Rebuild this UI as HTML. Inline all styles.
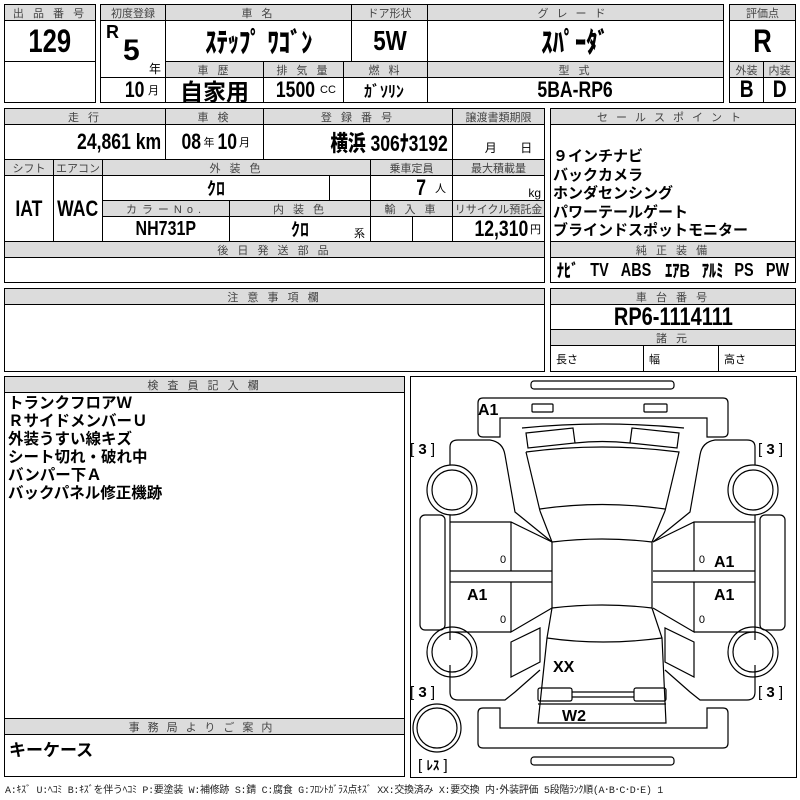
<!DOCTYPE html>
<html><head><meta charset="utf-8">
<style>
body{margin:0;width:800px;height:800px;background:#fff;position:relative;overflow:hidden;font-family:"Liberation Sans","Noto Sans CJK JP",sans-serif;}
.c{position:absolute;box-sizing:border-box;border:1px solid #000;background:#fff;display:flex;align-items:center;justify-content:center;overflow:hidden;white-space:nowrap;}
.h{background:#dcdcdc;font-size:11px;color:#444;letter-spacing:3px;}
.v{font-family:"Liberation Sans","Noto Sans CJK JP",sans-serif;font-weight:bold;font-size:22px;}
.v b{display:inline-block;transform:scaleX(.8);}
.r b{transform-origin:right center;}
.s{font-size:11px;font-weight:normal;font-family:"Liberation Sans","Noto Sans CJK JP",sans-serif;}
.t{position:absolute;white-space:nowrap;}
</style></head><body>
<div class="c h" style="left:4px;top:4px;width:92px;height:17px">出 品 番 号</div>
<div class="c v" style="left:4px;top:20px;width:92px;height:42px;font-size:32px"><b>129</b></div>
<div class="c" style="left:4px;top:61px;width:92px;height:42px"></div>
<div class="c h" style="left:100px;top:4px;width:66px;height:17px;letter-spacing:0">初度登録</div>
<div class="c" style="left:100px;top:20px;width:66px;height:58px"></div>
<div class="t v" style="left:106px;top:22px;font-size:18px">R</div>
<div class="t v" style="left:123px;top:34px;font-size:30px">5</div>
<div class="t" style="left:149px;top:60px;font-size:12px">年</div>
<div class="c v r" style="left:100px;top:77px;width:66px;height:26px;justify-content:flex-end;padding-right:6px"><b>10</b><span class="s" style="margin-left:4px">月</span></div>
<div class="c h" style="left:165px;top:4px;width:187px;height:17px">車 名</div>
<div class="c v" style="left:165px;top:20px;width:187px;height:42px;font-size:28px"><b>ｽﾃｯﾌﾟ ﾜｺﾞﾝ</b></div>
<div class="c h" style="left:351px;top:4px;width:77px;height:17px;letter-spacing:0">ドア形状</div>
<div class="c v" style="left:351px;top:20px;width:77px;height:42px;font-size:28px"><b>5W</b></div>
<div class="c h" style="left:427px;top:4px;width:297px;height:17px;letter-spacing:8px">グレード</div>
<div class="c v" style="left:427px;top:20px;width:297px;height:42px;font-size:28px"><b>ｽﾊﾟｰﾀﾞ</b></div>
<div class="c h" style="left:165px;top:61px;width:99px;height:17px">車 歴</div>
<div class="c h" style="left:263px;top:61px;width:81px;height:17px">排 気 量</div>
<div class="c h" style="left:343px;top:61px;width:85px;height:17px">燃 料</div>
<div class="c h" style="left:427px;top:61px;width:297px;height:17px">型 式</div>
<div class="c v" style="left:165px;top:77px;width:99px;height:26px;font-size:23px;font-family:'Noto Sans CJK JP',sans-serif">自家用</div>
<div class="c v" style="left:263px;top:77px;width:81px;height:26px"><b>1500</b><span class="s">CC</span></div>
<div class="c v" style="left:343px;top:77px;width:85px;height:26px;font-size:16px;justify-content:flex-start;padding-left:20px">ｶﾞｿﾘﾝ</div>
<div class="c v" style="left:427px;top:77px;width:297px;height:26px"><b>5BA-RP6</b></div>
<div class="c h" style="left:729px;top:4px;width:67px;height:17px;letter-spacing:0">評価点</div>
<div class="c v" style="left:729px;top:20px;width:67px;height:42px;font-size:32px"><b>R</b></div>
<div class="c h" style="left:729px;top:61px;width:35px;height:17px;letter-spacing:0">外装</div>
<div class="c h" style="left:763px;top:61px;width:33px;height:17px;letter-spacing:0">内装</div>
<div class="c v" style="left:729px;top:77px;width:35px;height:26px;font-size:24px"><b>B</b></div>
<div class="c v" style="left:763px;top:77px;width:33px;height:26px;font-size:24px"><b>D</b></div>
<div class="c h" style="left:4px;top:108px;width:162px;height:17px">走 行</div>
<div class="c v r" style="left:4px;top:124px;width:162px;height:36px;justify-content:flex-end;padding-right:4px"><b>24,861 km</b></div>
<div class="c h" style="left:165px;top:108px;width:99px;height:17px">車 検</div>
<div class="c v" style="left:165px;top:124px;width:99px;height:36px"><b>08</b><span class="s">年</span><b>10</b><span class="s">月</span></div>
<div class="c h" style="left:263px;top:108px;width:190px;height:17px">登 録 番 号</div>
<div class="c v r" style="left:263px;top:124px;width:190px;height:36px;justify-content:flex-end;padding-right:4px"><b><span style="font-family:'Noto Sans CJK JP';font-size:22px">横浜</span>&nbsp;306ﾅ3192</b></div>
<div class="c h" style="left:452px;top:108px;width:93px;height:17px;letter-spacing:0">譲渡書類期限</div>
<div class="c" style="left:452px;top:124px;width:93px;height:36px;font-size:12px;align-items:flex-end;padding-bottom:3px;justify-content:space-around;padding-left:20px">月<span>日</span></div>
<div class="c h" style="left:4px;top:159px;width:50px;height:17px;letter-spacing:0">シフト</div>
<div class="c h" style="left:53px;top:159px;width:50px;height:17px;letter-spacing:0">エアコン</div>
<div class="c v" style="left:4px;top:175px;width:50px;height:67px"><b>IAT</b></div>
<div class="c v" style="left:53px;top:175px;width:50px;height:67px"><b>WAC</b></div>
<div class="c h" style="left:102px;top:159px;width:269px;height:17px">外 装 色</div>
<div class="c v" style="left:102px;top:175px;width:228px;height:26px;font-size:18px">ｸﾛ</div>
<div class="c" style="left:329px;top:175px;width:42px;height:26px"></div>
<div class="c h" style="left:370px;top:159px;width:83px;height:17px;letter-spacing:0">乗車定員</div>
<div class="c v" style="left:370px;top:175px;width:83px;height:26px;justify-content:flex-end;padding-right:6px"><b>7</b><span class="s" style="margin-left:8px">人</span></div>
<div class="c h" style="left:452px;top:159px;width:93px;height:17px;letter-spacing:0">最大積載量</div>
<div class="c" style="left:452px;top:175px;width:93px;height:26px;justify-content:flex-end;padding-right:3px;font-size:12px;align-items:flex-end">kg</div>
<div class="c h" style="left:102px;top:200px;width:128px;height:17px;letter-spacing:5px">カラーNo.</div>
<div class="c h" style="left:229px;top:200px;width:142px;height:17px">内 装 色</div>
<div class="c h" style="left:370px;top:200px;width:83px;height:17px">輸 入 車</div>
<div class="c h" style="left:452px;top:200px;width:93px;height:17px;letter-spacing:0">リサイクル預託金</div>
<div class="c v" style="left:102px;top:216px;width:128px;height:26px;font-size:20px"><b>NH731P</b></div>
<div class="c v" style="left:229px;top:216px;width:142px;height:26px;font-size:18px">ｸﾛ</div>
<div class="t" style="left:354px;top:225px;font-size:11px">系</div>
<div class="c" style="left:370px;top:216px;width:43px;height:26px"></div>
<div class="c" style="left:412px;top:216px;width:41px;height:26px"></div>
<div class="c v r" style="left:452px;top:216px;width:93px;height:26px;justify-content:flex-end;padding-right:3px"><b>12,310</b><span class="s" style="margin-left:2px">円</span></div>
<div class="c h" style="left:4px;top:241px;width:541px;height:17px">後 日 発 送 部 品</div>
<div class="c" style="left:4px;top:257px;width:541px;height:26px"></div>
<div class="c h" style="left:550px;top:108px;width:246px;height:17px;letter-spacing:8px">セールスポイント</div>
<div class="c" style="left:550px;top:124px;width:246px;height:118px"></div>
<div class="t" style="left:553px;top:147px;font-size:15px;font-weight:bold;line-height:18.5px;font-family:'Noto Sans CJK JP',sans-serif">９インチナビ<br>バックカメラ<br>ホンダセンシング<br>パワーテールゲート<br>ブラインドスポットモニター</div>
<div class="c h" style="left:550px;top:241px;width:246px;height:17px">純 正 装 備</div>
<div class="c v" style="left:550px;top:257px;width:246px;height:26px;font-size:18px;justify-content:space-around"><b>ﾅﾋﾞ</b><b>TV</b><b>ABS</b><b>ｴｱB</b><b>ｱﾙﾐ</b><b>PS</b><b>PW</b></div>
<div class="c h" style="left:4px;top:288px;width:541px;height:17px">注 意 事 項 欄</div>
<div class="c" style="left:4px;top:304px;width:541px;height:68px"></div>
<div class="c h" style="left:550px;top:288px;width:246px;height:17px">車 台 番 号</div>
<div class="c v" style="left:550px;top:304px;width:246px;height:26px;font-size:25px"><b>RP6-1114111</b></div>
<div class="c h" style="left:550px;top:329px;width:246px;height:17px">諸 元</div>
<div class="c" style="left:550px;top:345px;width:94px;height:27px;justify-content:flex-start;padding-left:5px;font-size:11px">長さ</div>
<div class="c" style="left:643px;top:345px;width:76px;height:27px;justify-content:flex-start;padding-left:5px;font-size:11px">幅</div>
<div class="c" style="left:718px;top:345px;width:78px;height:27px;justify-content:flex-start;padding-left:5px;font-size:11px">高さ</div>
<div class="c" style="left:4px;top:376px;width:401px;height:401px"></div>
<div class="c h" style="left:4px;top:376px;width:401px;height:17px">検 査 員 記 入 欄</div>
<div class="t" style="left:8px;top:393px;font-size:15.5px;font-weight:bold;line-height:18px;font-family:'Noto Sans CJK JP',sans-serif">トランクフロアＷ<br>ＲサイドメンバーＵ<br>外装うすい線キズ<br>シート切れ・破れ中<br>バンパー下Ａ<br>バックパネル修正機跡</div>
<div class="c h" style="left:4px;top:718px;width:401px;height:17px;letter-spacing:8px">事務局よりご案内</div>
<div class="t" style="left:9px;top:736px;font-size:17px;font-weight:bold;font-family:'Noto Sans CJK JP',sans-serif">キーケース</div>
<div class="c" style="left:410px;top:376px;width:387px;height:402px"></div>
<svg style="position:absolute;left:0;top:0" width="800" height="800" fill="none" stroke="#000" stroke-width="1.2">
<rect x="531" y="381" width="143" height="8" rx="3"/>
<rect x="531" y="757" width="143" height="8" rx="3"/>
<path d="M483,398 L723,398 Q728,398 728,403 L728,432 Q728,437 723,437 L707,437 L707,418 L500,418 L500,437 L483,437 Q478,437 478,432 L478,403 Q478,398 483,398 Z"/>
<rect x="532" y="404" width="21" height="8" rx="1"/>
<rect x="644" y="404" width="23" height="8" rx="1"/>
<path d="M522,428 Q602,420 684,428"/>
<path d="M526,433 L573,428 L575,443 L528,448 Z"/>
<path d="M679,433 L632,428 L630,443 L677,448 Z"/>
<path d="M575,443 Q602,440 630,443"/>
<path d="M526,452 Q602,442 679,452 L665,511 M540,511 L526,452"/>
<path d="M540,509 Q602,500 665,509"/>
<path d="M540,511 L552,542 M665,511 L652,542"/>
<path d="M552,542 Q602,536 652,542 L652,608 M552,542 L552,608"/>
<path d="M552,608 Q602,602 652,608"/>
<path d="M552,608 L547,638 L538,723 L666,723 L662,638 L652,608"/>
<path d="M547,638 Q602,646 662,638"/>
<rect x="538" y="688" width="34" height="13" rx="2"/>
<rect x="634" y="688" width="32" height="13" rx="2"/>
<path d="M572,692 L634,692 M572,697 L634,697"/>
<path d="M538,704 L666,704"/>
<path d="M483,708 L500,708 L500,728 L707,728 L707,708 L723,708 Q728,708 728,713 L728,743 Q728,748 723,748 L483,748 Q478,748 478,743 L478,713 Q478,708 483,708 Z"/>
<g id="L">
<path d="M450,465 L450,447 Q450,440 458,440 L490,440 Q503,442 505,455 L515,512 L552,542"/>
<circle cx="452" cy="490" r="25"/><circle cx="452" cy="490" r="20"/>
<rect x="420" y="515" width="25" height="115" rx="5"/>
<path d="M450,522 L511,522 L552,542 M511,522 L511,571 M450,571 L552,571 M450,582 L552,582 M511,582 L511,632 L552,608 M450,632 L511,632 M450,515 L450,640"/>
<circle cx="452" cy="652" r="25"/><circle cx="452" cy="652" r="20"/>
<path d="M511,642 L540,628 L540,662 L511,677 Z"/>
<path d="M450,665 L450,692 Q450,700 458,700 L505,700 L515,692 L540,670"/>
<text x="500" y="563" font-size="11" fill="#000" stroke="none" font-family="Liberation Sans">0</text>
<text x="500" y="623" font-size="11" fill="#000" stroke="none" font-family="Liberation Sans">0</text>
</g>
<use href="#L" transform="translate(1205,0) scale(-1,1)"/>
<circle cx="437" cy="728" r="24"/><circle cx="437" cy="728" r="20"/>
<g fill="#000" stroke="none" font-family="Liberation Sans" font-weight="bold" font-size="16">
<text x="478" y="415">A1</text>
<text x="714" y="567">A1</text>
<text x="714" y="600">A1</text>
<text x="467" y="600">A1</text>
<text x="553" y="672">XX</text>
<text x="562" y="721">W2</text>
</g>
<g fill="#000" stroke="none" font-family="Liberation Sans" font-size="15">
<text x="410" y="454">[ <tspan font-weight="bold">3</tspan> ]</text>
<text x="758" y="454">[ <tspan font-weight="bold">3</tspan> ]</text>
<text x="410" y="697">[ <tspan font-weight="bold">3</tspan> ]</text>
<text x="758" y="697">[ <tspan font-weight="bold">3</tspan> ]</text>
<text x="418" y="770">[ <tspan font-weight="bold" font-family="Noto Sans CJK JP" font-size="13">ﾚｽ</tspan> ]</text>
</g>
</svg>
<div class="t" style="left:5px;top:781px;font-size:10px;letter-spacing:-0.3px;color:#222;font-family:'Liberation Mono','Noto Sans CJK JP',monospace">A:ｷｽﾞ U:ﾍｺﾐ B:ｷｽﾞを伴うﾍｺﾐ P:要塗装 W:補修跡 S:錆 C:腐食 G:ﾌﾛﾝﾄｶﾞﾗｽ点ｷｽﾞ XX:交換済み X:要交換 内･外装評価 5段階ﾗﾝｸ順(A･B･C･D･E) 1</div>
</body></html>
